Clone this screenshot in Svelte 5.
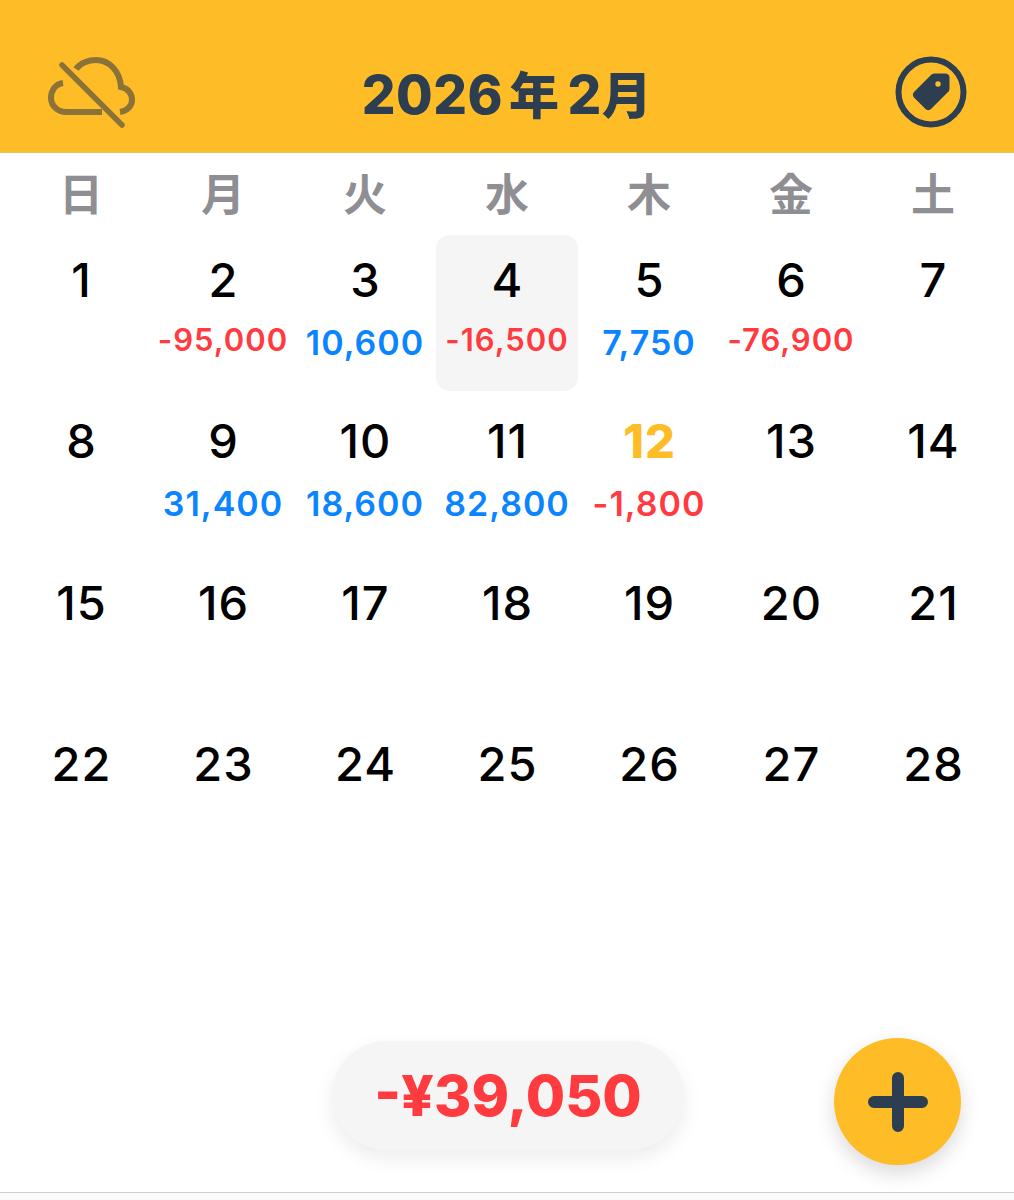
<script>
	const weekdays = ["日", "月", "火", "水", "木", "金", "土"]
	// font size varies per amount, the app shrinks text to fit the cell
	const amounts = {
		2: { text: "-95,000", size: 31, shift: -3 },
		3: { text: "10,600", size: 34, shift: 0 },
		4: { text: "-16,500", size: 31, shift: -3 },
		5: { text: "7,750", size: 34, shift: 0 },
		6: { text: "-76,900", size: 31, shift: -3 },
		9: { text: "31,400", size: 34, shift: 0 },
		10: { text: "18,600", size: 34, shift: 0 },
		11: { text: "82,800", size: 34, shift: 0 },
		12: { text: "-1,800", size: 34, shift: 0 },
	}
	const days = Array.from({ length: 28 }, (_, i) => i + 1)
	const selected = 4
	const today = 12
</script>

<div class="page">
	<header>
		<button class="icon" aria-label="sync off">
			<svg width="90" height="72" viewBox="0 0 90 72" fill="none" stroke="#8a7238" stroke-width="6">
				<path d="M16 27C8 28 4 35 4 42C4 50 11 56 19 56H55" />
				<path d="M29 13C33 7 42 4 49 4C62 4 73 15 74 31C81 32 85 38 85 44C85 50 80 55 73 56" />
				<path d="M15 9L75 69" stroke-width="5.500" stroke-linecap="round" />
			</svg>
		</button>
		<h1>2026<span class="kanji gap">年</span>2<span class="kanji">月</span></h1>
		<button class="icon" aria-label="tags">
			<svg width="72" height="72" viewBox="0 0 72 72" fill="none">
				<circle cx="36" cy="36" r="32.500" stroke="#2c3e50" stroke-width="6" />
				<path d="M19 36L36 19C37 18 38.500 17.500 40 17.500L50 17.500C53 17.500 54.500 19 54.500 22L54.500 32C54.500 33.500 54 35 53 36L36 53C34.500 54.500 32 54.500 30.500 53L19 41.500C17.500 40 17.500 37.500 19 36Z" fill="#2c3e50" />
				<circle cx="43" cy="28" r="2.700" fill="#febc27" />
			</svg>
		</button>
	</header>

	<main>
		<div class="weekdays">
			{#each weekdays as w}
				<div class="kanji">{w}</div>
			{/each}
		</div>
		<div class="grid">
			{#each days as d}
				<div class="cell" class:selected={d === selected}>
					<div class="num" class:today={d === today}>{d}</div>
					{#if amounts[d]}
						<div
							class="amount"
							class:neg={amounts[d].text.startsWith("-")}
							style="font-size: {amounts[d].size}px; margin-top: {amounts[d].shift}px"
						>
							{amounts[d].text}
						</div>
					{/if}
				</div>
			{/each}
		</div>

		<div class="total">-¥39,050</div>
		<button class="fab" aria-label="add">
			<svg width="60" height="60" viewBox="0 0 60 60">
				<path d="M30 6V54M6 30H54" stroke="#2c3e50" stroke-width="12" stroke-linecap="round" />
			</svg>
		</button>
	</main>
	<footer></footer>
</div>

<style>
	:global(body) {
		background: #fff;
	}

	.page {
		height: 1200px;
		display: flex;
		flex-direction: column;
		font-family: Inter, "Noto Sans CJK JP", sans-serif;
		overflow: hidden;
	}

	header {
		height: 153px;
		box-sizing: border-box;
		background: #febc27;
		border-bottom: 1px solid #e6c15f;
		display: flex;
		align-items: center;
		justify-content: space-between;
		padding: 32px 47px 0 47px;
	}

	h1 {
		margin: 0;
		font-size: 53px;
		font-weight: 800;
		color: #2c3e50;
		letter-spacing: 0.5px;
		position: relative;
		left: -9px;
	}

	.kanji {
		font-family: "Noto Sans CJK JP", sans-serif;
	}

	h1 .kanji {
		font-size: 50px;
		font-weight: 900;
	}

	.gap {
		margin: 0 8px 0 6px;
	}

	.icon {
		border: 0;
		padding: 0;
		background: none;
		display: flex;
	}

	main {
		flex: 1;
		position: relative;
		padding: 0 10px;
	}

	.weekdays {
		display: grid;
		grid-template-columns: repeat(7, 142px);
		height: 82px;
		padding-bottom: 4px;
		box-sizing: border-box;
		align-items: center;
		text-align: center;
		font-size: 44px;
		font-weight: 700;
		color: #8e8e93;
		line-height: 1;
	}

	.grid {
		display: grid;
		grid-template-columns: repeat(7, 142px);
		grid-auto-rows: 156px;
		row-gap: 5.300px;
	}

	.cell {
		display: flex;
		flex-direction: column;
		align-items: center;
		padding-top: 17px;
		border-radius: 14px;
		box-sizing: border-box;
	}

	.selected {
		background: #f5f5f5;
	}

	.num {
		font-size: 47px;
		line-height: 56px;
		font-weight: 500;
		letter-spacing: 1px;
		padding-left: 1px;
		color: #000;
	}

	.today {
		color: #febc27;
		font-weight: 800;
	}

	.amount {
		line-height: 40px;
		padding-top: 15px;
		font-weight: 600;
		letter-spacing: 1px;
		color: #0a84ff;
		white-space: nowrap;
	}

	.neg {
		color: #ff3b3f;
	}

	.total {
		position: absolute;
		left: 332px;
		top: 888px;
		width: 352px;
		height: 109px;
		border-radius: 55px;
		background: #f5f5f5;
		box-shadow: 0 8px 20px rgba(0, 0, 0, 0.08);
		display: flex;
		align-items: center;
		justify-content: center;
		font-weight: 800;
		font-size: 57px;
		color: #ff3b3f;
	}

	.fab {
		position: absolute;
		left: 834px;
		top: 885px;
		width: 127px;
		height: 127px;
		border: 0;
		padding: 0;
		border-radius: 50%;
		background: #febc27;
		box-shadow: 0 8px 20px rgba(0, 0, 0, 0.15);
		display: flex;
		align-items: center;
		justify-content: center;
	}

	footer {
		height: 7px;
		border-top: 1px solid #cfcfcf;
		background: #fafafa;
	}
</style>
